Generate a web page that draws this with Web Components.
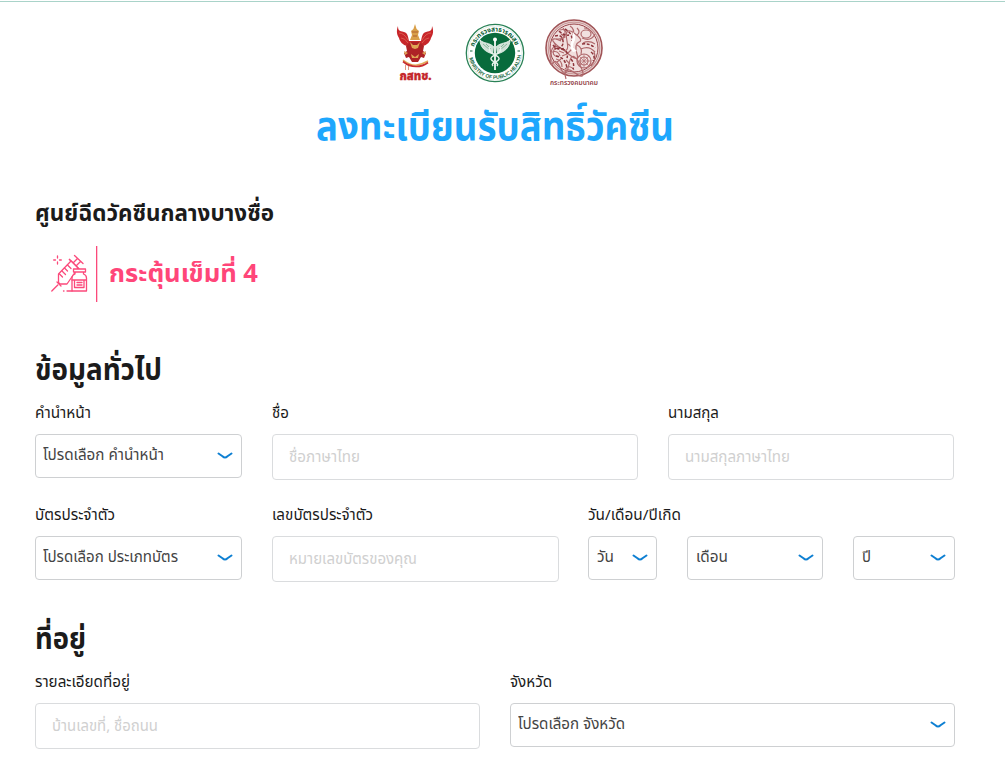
<!DOCTYPE html>
<html lang="th">
<head>
<meta charset="utf-8">
<title>ลงทะเบียนรับสิทธิ์วัคซีน</title>
<style>
body{margin:0;background:#fff;color:#1b1b1b;font-family:"Noto Sans Thai","Noto Sans",sans-serif;height:764px;overflow:hidden}
</style>
</head>
<body>
<vaccine-page></vaccine-page>
<script>
const define=(name,html,init)=>{
  const t=document.createElement('template');
  t.innerHTML=html;
  customElements.define(name,class extends HTMLElement{
    constructor(){super();this.attachShadow({mode:'open'}).append(t.content.cloneNode(true));}
    connectedCallback(){if(init)init.call(this,this.shadowRoot);}
  });
};

/* One line of text set to a given measure */
define('fit-text',`<style>
:host{display:block;white-space:nowrap;overflow:visible}
span{display:inline-block;transform-origin:0 50%}
</style><span><slot></slot></span>`,function(r){
  const s=r.querySelector('span'),w=+this.getAttribute('w');
  this.style.width=w+'px';
  const n=s.getBoundingClientRect().width;
  if(w&&n)s.style.transform='scaleX('+(w/n)+')';
});

define('garuda-logo',`<style>:host{display:block;width:44px;height:66px}svg{display:block;overflow:visible}</style>
<svg width="44" height="66" viewBox="393 18 44 66">
<path d="M398 26c0 4 1 5 6 6 4 1 4 5 5 9h12c1-4 1-8 5-9 5-1 6-2 6-6 2 5 1 9-1 12-1 4-4 7-8 8l-4 3h-8l-4-3c-4-1-7-4-8-8-2-3-3-7-1-12z" fill="#c8262a"/>
<path d="M399 33q5 0 9 7M401 38q4 0 7 5M431 33q-5 0-9 7M429 38q-4 0-7 5" stroke="#e2705d" stroke-width=".7" fill="none"/>
<path d="M415 24l-1.600 5-2.400 2 1 4-2 5h10l-2-5 1-4-2.400-2z" fill="#d9a04a"/>
<path d="M412 32h6M413 36h4" stroke="#a4502a" stroke-width=".8"/>
<path d="M406 46l5-4h8l5 4-1 5 3 2-2 5-3-1-3 5h-6l-3-5-3 1-2-5 3-2z" fill="#ae2226"/>
<path d="M410 42l3 3h4l3-3-2 6-3 1-3-1zM404 51l4 2-3 2zM426 51l-4 2 3 2zM411 54l4 3 4-3-1 4h-6z" fill="#dfa455"/>
<path d="M403 60q8 6 14 5t11-4" stroke="#e3aa55" stroke-width="1.500" fill="none"/>
<path d="M403 61.500q6 5 13 5t12-4" stroke="#c92d2e" stroke-width="1.700" fill="none"/>
<path d="M405.500 65v5M408.500 66v4" stroke="#df9a82" stroke-width="1" fill="none"/>
<text x="399.500" y="80" textLength="32" lengthAdjust="spacingAndGlyphs" font-family="Noto Sans Thai,sans-serif" font-size="12" font-weight="900" fill="#c5282c" stroke="#c5282c" stroke-width=".3">กสทช.</text>
</svg>`);

define('health-logo',`<style>:host{display:block;width:60px;height:60px}svg{display:block}</style>
<svg width="60" height="60" viewBox="-30 -30 60 60">
<circle r="28.700" fill="#fff" stroke="#2a8257" stroke-width="1.300"/><circle r="27" fill="none" stroke="#c3ddcf" stroke-width=".5"/>
<circle r="20.200" fill="#086b3c"/>
<defs><path id="up" d="M-20.800-6A21.700 21.700 0 0 1 20.800-6"/><path id="dn" d="M-26.100 2A26.200 26.200 0 0 0 26.100 2"/></defs>
<text font-family="Noto Sans Thai,sans-serif" font-size="6.800" font-weight="800" fill="#17683f"><textPath href="#up" startOffset="0" textLength="54" lengthAdjust="spacingAndGlyphs">กระทรวงสาธารณสุข</textPath></text>
<text font-family="Liberation Sans" font-size="5.200" font-weight="700" fill="#17683f"><textPath href="#dn" startOffset="3" textLength="74" lengthAdjust="spacingAndGlyphs">MINISTRY OF PUBLIC HEALTH</textPath></text>
<path d="M-25-2h2.500M22.500-2h2.500" stroke="#17683f" stroke-width="1.200"/>
<path d="M0-14V17" stroke="#e7f2eb" stroke-width="1.900"/><circle cy="-13.500" r="2" fill="#fff"/>
<path d="M-1-6C-6-11-11-9-15-13c0 7 5 12 13 14M1-6C6-11 11-9 15-13 15-6 10-1 2 1" fill="#cfe2d7" stroke="#f2f7f4" stroke-width=".8"/>
<path d="M-12-9l7 6M-9-9l5 5M12-9L5-3M9-9L4-4" stroke="#5b9876" stroke-width=".6"/>
<path d="M-5-6C-9 1 5 2 4 6S-5 9-2 13M5-6C9 1-5 2-4 6S5 9 2 13" fill="none" stroke="#e7f2eb" stroke-width="1.500"/>
</svg>`);

define('transport-logo',`<style>:host{display:block;width:60px;height:70px}svg{display:block}</style>
<svg width="60" height="70" viewBox="-30 -30 60 70">
<circle r="28" fill="#f0dedd" stroke="#a05457" stroke-width="1.600"/><circle r="25.800" fill="none" stroke="#c99b9b" stroke-width="1.200"/><circle r="24" fill="#f1e0df" stroke="#984449" stroke-width="1"/>
<g fill="none" stroke="#b06a6d" stroke-width="1.200">
<path d="M-14-18q6-2 5 4t-9 5 3 8 8-6 7-8 5 9-2 12-11-2-15 2 2 9 8 6 8-5 11 1-5 8-9 6M-20-5q3 2 0 7t4 7M-18 11q6 1 6 8M-4-22q5 3 3 9M-22 4q6-2 8 4M-9 21q5-5 9 1"/>
<path d="M3-20q4 4 0 7M8-10q9 4 13-4M9-5q6-3 12 1M7 1q8-4 14 3M20 4q3 7-3 14M3-3q6 3 4 9M-13-14l4 3-5 3M-6-4l5 4-6 6M-18-9l5 2M-15 3l5 2M-8 12l4 4M-17 14l4-3M-20 0l5 1M-11-20l3 4M-12 8l5-2M10-20q5 0 9 5"/>
<ellipse cx="12" cy="-14" rx="5" ry="4"/><circle cx="10" cy="13" r="7"/><circle cx="10" cy="13" r="4"/><path d="M3 13h14M10 6v14M5 8l10 10M15 8L5 18" stroke-width=".7"/>
</g>
<g stroke="#8e343a" stroke-width="1.500" fill="none" stroke-dasharray="3 1.600"><path d="M-19-12q7-2 8 5t-8 8M-9-19q8 5 7 12M-18 8q9 1 11 12M8-4q8-1 13 4M-12 1q7 2 5 9M-21-3q5 6 12 3M-15-17q5 5 10 4M-3 11q4 5 2 10M17 4q5 4 2 9"/></g>
<path d="M-1-16q4 5 1 10t3 9l-4 1q-4-4-2-9t2-11z" fill="#fff"/>
<text x="-24" y="37" textLength="48" lengthAdjust="spacingAndGlyphs" font-family="Noto Sans Thai,sans-serif" font-size="7.300" font-weight="600" fill="#914046">กระทรวงคมนาคม</text>
</svg>`);

define('syringe-icon',`<style>:host{display:block;width:38px;height:40px}svg{display:block}</style>
<svg width="38" height="40" viewBox="51 253.500 38 40" fill="none" stroke="#fb4a7b" stroke-width="1.300" stroke-linecap="round" stroke-linejoin="round">
<path d="M51.800 290.500l6-6M74.500 255l8.500 8M77.500 258l-4 4M80.500 261l-4 4"/>
<path d="M69.500 259l9.500 9.500" stroke-width="1.700"/>
<path d="M71 260.500L58.500 273.500v8.500l1.500 1.500h7L78 267.500z" fill="#fff"/>
<path d="M57 281.500l4 4M67.500 264.500l3.500 3.500M64.500 267.500l3 3M62 270.500l3.500 3.500M59.500 273.500l3 3"/>
<path d="M75 272v1.500q-3 1-3 4v13h14.500v-13q0-3-3-4V272" fill="#fff"/>
<path d="M73.500 268.500h12v3h-12z" fill="#fff"/>
<path d="M72 279.500h14M74.500 279.500v7.500h9.500v-7.500M77 282h5M77 284.500h5M63.500 290.500h.5M67 290.500h5"/>
<path d="M57.500 255.500v2M57.500 261.500v2M53.700 259.500h1.800M59.500 259.500h1.800"/>
</svg>`);

define('select-box',`<style>
:host{display:flex;box-sizing:border-box;height:44px;border:1px solid #ced0d2;border-radius:4px;padding:0 8px 0 7px;align-items:center;justify-content:space-between;color:#444;font-size:15px;line-height:24px}
svg{flex:none;display:block}
</style><slot></slot><svg width="16" height="9" viewBox="0 0 16 9"><path d="M1.500 1.500L5.500 4.300Q8 6.700 10.500 4.300L14.500 1.500" fill="none" stroke="#0d7fd2" stroke-width="2" stroke-linecap="round" stroke-linejoin="round"/></svg>`);

define('text-box',`<style>
:host{display:flex;box-sizing:border-box;height:46px;border:1px solid #dadcde;border-radius:4px;padding:1px 16px 0;align-items:center;color:#d0d0d0;font-size:15px;line-height:24px}
</style><slot></slot>`);

define('form-field',`<style>
:host{display:block;min-width:0}
.label{height:31px;font-size:15px;line-height:22px}
</style><div class="label"><slot name="label"></slot></div><slot></slot>`);

define('vaccine-page',`<style>
:host{display:block;border-top:1px solid #fff}
main{border-top:1px solid #a9d3c9;padding:0 50px 0 35px;height:761px}
.logos{display:flex;height:80px;padding:16px 0 0 358px;box-sizing:border-box;width:920px}
health-logo{margin:5px 0 0 28px}
transport-logo{margin:0 0 0 19px}
h1,h2,h3{margin:0}
h1{color:#1ea7fd;font-size:39px;line-height:64px;height:64px;font-weight:700;display:flex;padding-left:281px;margin-top:15px}
h3{font-size:23.500px;line-height:36px;height:36px;font-weight:700;margin-top:35px}
.dose{display:flex;align-items:center;height:56px;margin-top:14px;padding-left:16px;color:#ff4679;font-size:25px;font-weight:700}
.dose i{width:1px;height:56px;background:#fb4a7b;margin:0 12px 0 7px;box-shadow:.3px 0 #fb4a7b}
h2{font-size:30px;line-height:44px;height:44px;font-weight:700}
.row{display:grid;gap:30px}
.a{grid-template-columns:207px 366px 286px;height:102px}
.b{grid-template-columns:207px 287px 367px;height:102px}
.b form-field:last-child{margin-left:-1px}
.date{display:grid;grid-template-columns:69px 136px 102px;gap:30px}
.date select-box{padding-left:8px}
.c{grid-template-columns:445px 445px}
</style>
<main>
<div class="logos"><garuda-logo></garuda-logo><health-logo></health-logo><transport-logo></transport-logo></div>
<h1><fit-text w="358">ลงทะเบียนรับสิทธิ์วัคซีน</fit-text></h1>
<h3><fit-text w="239">ศูนย์ฉีดวัคซีนกลางบางซื่อ</fit-text></h3>
<div class="dose"><syringe-icon></syringe-icon><i></i><fit-text w="149">กระตุ้นเข็มที่ 4</fit-text></div>
<h2 style="margin-top:47px"><fit-text w="127">ข้อมูลทั่วไป</fit-text></h2>
<div class="row a" style="margin-top:10px">
<form-field><fit-text slot="label" w="56">คำนำหน้า</fit-text><select-box><fit-text w="121">โปรดเลือก คำนำหน้า</fit-text></select-box></form-field>
<form-field><fit-text slot="label" w="17">ชื่อ</fit-text><text-box><fit-text w="71">ชื่อภาษาไทย</fit-text></text-box></form-field>
<form-field><fit-text slot="label" w="51">นามสกุล</fit-text><text-box><fit-text w="105">นามสกุลภาษาไทย</fit-text></text-box></form-field>
</div>
<div class="row b">
<form-field><fit-text slot="label" w="80">บัตรประจำตัว</fit-text><select-box><fit-text w="135">โปรดเลือก ประเภทบัตร</fit-text></select-box></form-field>
<form-field><fit-text slot="label" w="101">เลขบัตรประจำตัว</fit-text><text-box><fit-text w="128">หมายเลขบัตรของคุณ</fit-text></text-box></form-field>
<form-field><fit-text slot="label" w="93">วัน/เดือน/ปีเกิด</fit-text><div class="date"><select-box><fit-text w="17">วัน</fit-text></select-box><select-box><fit-text w="32">เดือน</fit-text></select-box><select-box><fit-text w="9">ปี</fit-text></select-box></div></form-field>
</div>
<h2 style="margin-top:11px"><fit-text w="51">ที่อยู่</fit-text></h2>
<div class="row c" style="margin-top:10px">
<form-field><fit-text slot="label" w="95">รายละเอียดที่อยู่</fit-text><text-box><fit-text w="106">บ้านเลขที่, ชื่อถนน</fit-text></text-box></form-field>
<form-field><fit-text slot="label" w="42">จังหวัด</fit-text><select-box><fit-text w="107">โปรดเลือก จังหวัด</fit-text></select-box></form-field>
</div>
</main>`);
</script>
</body>
</html>
